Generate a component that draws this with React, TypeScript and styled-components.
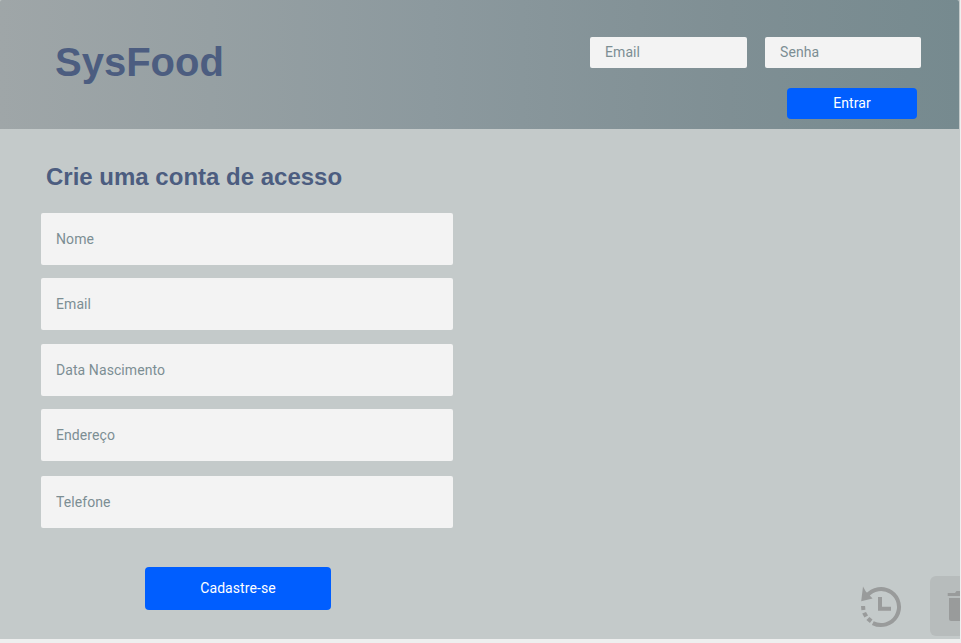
import React from 'react';
import styled, { createGlobalStyle } from 'styled-components';

const GlobalStyle = createGlobalStyle`
  * { box-sizing: border-box; }
  body { margin: 0; background: #eeefef; overflow: hidden; }
`;

const Page = styled.div`
  position: relative;
  width: 960px;
  height: 639px;
  background: #c4caca;
  font-family: Roboto, sans-serif;
`;

const Header = styled.header`
  display: flex;
  justify-content: space-between;
  width: 959px;
  height: 129px;
  padding: 37px 38px 0 55px;
  border-radius: 2px 2px 0 0;
  background: linear-gradient(90deg, #9fa6a8 0%, #96a0a3 22%, #8c999e 45%, #7f8f94 76%, #768a8f 100%);
`;

const Brand = styled.h1`
  margin: 2px 0 0;
  font: bold 40px/46px 'Liberation Sans', Arial, sans-serif;
  color: #4c5d80;
`;

const Login = styled.form`
  display: flex;
  flex-direction: column;
  align-items: flex-end;
  gap: 20px;
`;

const LoginFields = styled.div`
  display: flex;
  gap: 18px;
`;

const Input = styled.input<{ $w: number; $h: number; $lift?: number }>`
  display: block;
  width: ${(p) => p.$w}px;
  height: ${(p) => p.$h}px;
  padding: 0 15px ${(p) => p.$lift ?? 0}px;
  border: 0;
  border-radius: 2px;
  outline: 0;
  background: #f3f3f3;
  font: 14px Roboto, sans-serif;
  letter-spacing: 0.08px;
  color: #7c8e93;
  &::placeholder { color: #7c8e93; opacity: 1; }
`;

const Button = styled.button<{ $w: number; $h: number }>`
  width: ${(p) => p.$w}px;
  height: ${(p) => p.$h}px;
  padding: 0 0 2px;
  border: 0;
  border-radius: 4px;
  background: #005eff;
  color: #fff;
  font: 14px Roboto, sans-serif;
  letter-spacing: 0.08px;
`;

const LoginAction = styled.div`
  display: flex;
  padding-right: 4px;
`;

const Signup = styled.main`
  display: flex;
  flex-direction: column;
  width: 453px;
  padding: 33px 0 0 41px;
`;

const Title = styled.h2`
  margin: 0 0 21px 5px;
  font: bold 24px/30px 'Liberation Sans', Arial, sans-serif;
  color: #4c5d80;
`;

const Fields = styled.div`
  display: grid;
  grid-template-rows: 65px 66px 65px 67px 52px;
`;

const SignupAction = styled.div`
  display: flex;
  padding: 39px 0 0 104px;
`;

const HistoryControl = styled.div`
  position: absolute;
  left: 857px;
  top: 583px;
  width: 48px;
  height: 48px;
  svg { display: block; }
`;

const TrashControl = styled.div`
  position: absolute;
  left: 930px;
  top: 576px;
  width: 30px;
  height: 60px;
  border-radius: 6px 0 0 6px;
  background: #b7bcbc;
  overflow: hidden;
  svg { display: block; }
`;

const HistoryIcon = () => (
  <svg width="48" height="48" viewBox="0 0 48 48">
    <path d="M9.8 13A18 18 0 1 1 15.8 40.1" fill="none" stroke="#999b9b" strokeWidth="4" />
    <path d="M6 3.6L8.8 8.4L15.6 15.4L4.2 18.2Z" fill="#999b9b" />
    <path d="M23 14V25.7H34" fill="none" stroke="#999b9b" strokeWidth="4" />
    <path d="M4 23h4.1l.3 3.8-4 .4ZM5.2 30.6l3.8-1.6 2 3.5-3.6 2.1ZM9.4 37l3-3 3.1 2.5-2.6 3.5Z" fill="#999b9b" />
  </svg>
);

const TrashIcon = () => (
  <svg width="30" height="60" viewBox="0 0 30 60">
    <path d="M17.7 17H25l1.5-2H30v5H17.7ZM19 22H30v23h-9q-2 0-2-2Z" fill="#999b9b" />
  </svg>
);

const fields = ['Nome', 'Email', 'Data Nascimento', 'Endereço', 'Telefone'];

export default function App() {
  return (
    <>
      <GlobalStyle />
      <Page>
        <Header>
          <Brand>SysFood</Brand>
          <Login>
            <LoginFields>
              <Input $w={157} $h={31} $lift={2} placeholder="Email" />
              <Input $w={156} $h={31} $lift={2} type="password" placeholder="Senha" />
            </LoginFields>
            <LoginAction>
              <Button type="button" $w={130} $h={31}>Entrar</Button>
            </LoginAction>
          </Login>
        </Header>
        <Signup>
          <Title>Crie uma conta de acesso</Title>
          <Fields>
            {fields.map((name) => (
              <Input key={name} $w={412} $h={52} placeholder={name} />
            ))}
          </Fields>
          <SignupAction>
            <Button type="button" $w={186} $h={43}>Cadastre-se</Button>
          </SignupAction>
        </Signup>
        <HistoryControl><HistoryIcon /></HistoryControl>
        <TrashControl><TrashIcon /></TrashControl>
      </Page>
    </>
  );
}
